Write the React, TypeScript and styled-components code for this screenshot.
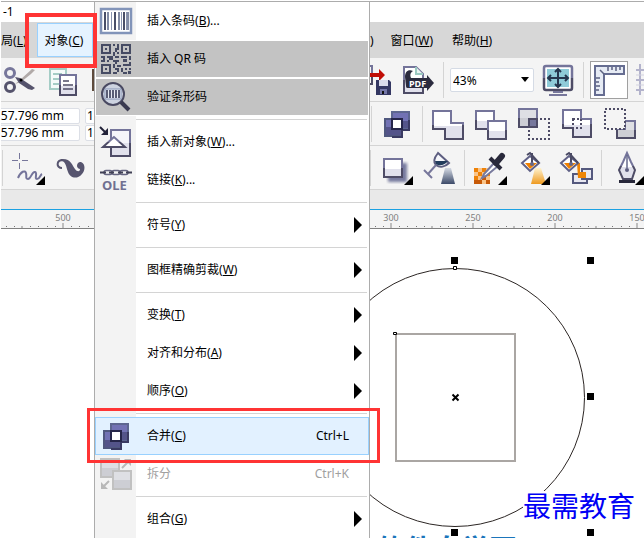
import React from "react";
import styled, { createGlobalStyle } from "styled-components";

const GlobalStyle = createGlobalStyle`
  * { box-sizing: border-box; }
  body {
    margin: 0;
    background: #fff;
    color: #000;
    font: 12px/16px "Noto Sans", "Noto Sans CJK SC", sans-serif;
  }
  button, input, select { font: inherit; color: inherit; }
`;

const Page = styled.div`
  position: relative;
  display: flex;
  flex-direction: column;
  min-height: 100vh;
  padding-left: 1px;
  overflow: hidden;
`;

const TitleBar = styled.header`
  height: 21px;
  margin-top: 1px;
  padding: 2px;
  border-top: 1px solid #acacac;
`;

const Strip = styled.div<{ $bg: string; $height: number; $line?: string }>`
  display: grid;
  grid-template-columns: 93px 276px minmax(0, 1fr);
  height: ${(p) => p.$height}px;
  background: ${(p) => p.$bg};
  border-bottom: ${(p) => (p.$line ? `1px solid ${p.$line}` : "0")};
`;

const Cell = styled.div<{ $column?: number; $gap?: number }>`
  grid-column: ${(p) => p.$column ?? 1};
  display: flex;
  align-items: center;
  gap: ${(p) => p.$gap ?? 0}px;
  min-width: 0;
  overflow: hidden;
`;

const TopMenu = styled.button<{ $open?: boolean; $flush?: boolean }>`
  flex: none;
  height: 34px;
  padding: ${(p) => (p.$flush ? "1px 0 0" : "1px 9px 0 7px")};
  border: ${(p) => (p.$flush ? "0" : "1px")} solid ${(p) => (p.$open ? "#99d1ff" : "transparent")};
  background: ${(p) => (p.$open ? "#e5f3ff" : "transparent")};
  white-space: nowrap;
`;

const TopMenuGroup = styled.div`
  display: flex;
  gap: 1px;
  margin-left: 9px;
`;

const ToolButton = styled.button<{ $width?: number; $pressed?: boolean }>`
  flex: none;
  display: flex;
  align-items: center;
  justify-content: center;
  width: ${(p) => p.$width ?? 43}px;
  height: ${(p) => (p.$pressed ? 38 : 43)}px;
  padding: 0;
  border: ${(p) => (p.$pressed ? "1px solid #a0a0a0" : "0")};
  background: ${(p) => (p.$pressed ? "#fff" : "transparent")};
  overflow: hidden;
  svg { flex: none; display: block; }
`;

const Divider = styled.span<{ $before?: number; $after?: number }>`
  flex: none;
  width: 1px;
  height: 36px;
  margin: 0 ${(p) => p.$after ?? 4}px 0 ${(p) => p.$before ?? 3}px;
  background: #d4d4d4;
`;

const Fields = styled.div`
  display: grid;
  gap: 1px;
  flex: none;
  padding-top: 1px;
`;

const SizeInput = styled.input<{ $cut?: boolean }>`
  width: ${(p) => (p.$cut ? 88 : 30)}px;
  height: 16px;
  margin-left: ${(p) => (p.$cut ? "-9px" : "0")};
  padding: 1px 1px 0;
  border: 1px solid #dcdfe6;
  border-radius: 2px;
  background: #fff;
`;

const ZoomBox = styled.label`
  flex: none;
  display: flex;
  align-items: center;
  width: 84px;
  height: 24px;
  margin: 0 3px 0 2px;
  padding-right: 4px;
  border: 1px solid #d5dbe5;
  border-radius: 2px;
  background: #fff;
  select {
    flex: 1;
    min-width: 0;
    padding: 2px 2px 0;
    border: 0;
    appearance: none;
    background: transparent;
  }
`;

const RulerStrip = styled(Strip)`
  border-top: 1px solid #1ba1e2;
`;

const RulerTrack = styled.div<{ $column: number; $shift: number }>`
  grid-column: ${(p) => p.$column};
  display: flex;
  min-width: 0;
  overflow: hidden;
  > div:first-child { margin-left: ${(p) => p.$shift}px; }
`;

const RulerSegment = styled.div`
  flex: none;
  width: 82px;
  color: #808080;
  font-size: 9px;
  line-height: 11px;
  text-align: center;
  padding-top: 2px;
  svg { display: block; }
`;

const Canvas = styled.main`
  position: relative;
  flex: 1;
  display: grid;
  grid-template-columns: 369px minmax(0, 1fr);
  overflow: hidden;
  > svg { grid-column: 2; display: block; }
`;

const Caption = styled.div`
  position: absolute;
  left: 376px;
  top: 303px;
  color: #1b75bb;
  font-size: 28px;
  line-height: 34px;
  font-weight: 700;
  white-space: nowrap;
`;

const Watermark = styled.div`
  position: absolute;
  left: 522px;
  top: 262px;
  background: #fff;
  color: #0000f5;
  font-size: 28px;
  line-height: 30px;
  white-space: nowrap;
`;

const Menu = styled.div`
  position: absolute;
  top: 1px;
  left: 94px;
  width: 276px;
  border: 1px solid #acacac;
  border-bottom: 0;
  background: linear-gradient(to right, #f3f3f3 41px, #fff 41px);
`;

const edge = { plain: "none", gray: "inset 0 0 0 1px #fff", active: "inset 0 0 0 1px #99d1ff" };
const fill = { plain: "transparent", gray: "#c3c3c3", active: "#e2f1ff" };

const MenuItem = styled.button<{ $tone: "plain" | "gray" | "active" }>`
  display: grid;
  grid-template-columns: 41px 1fr auto;
  align-items: center;
  width: 100%;
  height: 38px;
  padding: 0 20px 0 0;
  border: 0;
  background: ${(p) => fill[p.$tone]};
  box-shadow: ${(p) => edge[p.$tone]};
  text-align: left;
  &:disabled { color: #a0a0a0; }
  > svg { grid-column: 1; margin-left: 2px; }
`;

const ItemLabel = styled.span`
  grid-column: 2;
  padding-left: 11px;
  white-space: nowrap;
`;

const Shortcut = styled.kbd`
  font: inherit;
`;

const SubArrow = styled.span`
  width: 0;
  margin: 0 -13px 0 5px;
  border: 8px solid transparent;
  border-left-color: #000;
  border-right-width: 0;
`;

const MenuLine = styled.hr`
  height: 1px;
  margin: 3px 2px 3px 41px;
  border: 0;
  background: #d4d4d4;
`;

const Highlight = styled.div<{ $x: number; $y: number; $w: number; $h: number; $line: number }>`
  position: absolute;
  left: ${(p) => p.$x}px;
  top: ${(p) => p.$y}px;
  width: ${(p) => p.$w}px;
  height: ${(p) => p.$h}px;
  border: ${(p) => p.$line}px solid #ff3434;
  pointer-events: none;
`;

const Palette = styled.svg`
  position: absolute;
  width: 0;
  height: 0;
`;

const Shades = () => (
  <Palette aria-hidden>
    <defs>
      <linearGradient id="line" x1="0" y1="0" x2="0" y2="1">
        <stop offset=".5" stopColor="#74749a" />
        <stop offset=".5" stopColor="#4e4c66" />
      </linearGradient>
      <linearGradient id="paper" x1="0" y1="0" x2="0" y2="1">
        <stop offset=".55" stopColor="#fff" />
        <stop offset=".55" stopColor="#e1e1ec" />
      </linearGradient>
      <linearGradient id="grey" x1="0" y1="0" x2="0" y2="1">
        <stop offset=".5" stopColor="#dedfe4" />
        <stop offset=".5" stopColor="#cdced4" />
      </linearGradient>
      <linearGradient id="violet" x1="0" y1="0" x2="0" y2="1">
        <stop offset=".5" stopColor="#7272b4" />
        <stop offset=".5" stopColor="#54548a" />
      </linearGradient>
      <linearGradient id="beam" x1="0" y1="0" x2="0" y2="1">
        <stop offset="0" stopColor="#d5dae4" />
        <stop offset="1" stopColor="#3c4a68" />
      </linearGradient>
      <linearGradient id="gold" x1="0" y1="0" x2="0" y2="1">
        <stop offset="0" stopColor="#fff3cf" />
        <stop offset="1" stopColor="#ee9a20" />
      </linearGradient>
      <filter id="soft"><feGaussianBlur stdDeviation="1.5" /></filter>
    </defs>
  </Palette>
);

type IconProps = { box: string; children: React.ReactNode };
const Icon = ({ box, children }: IconProps) => {
  const [, , w, h] = box.split(" ");
  return (
    <svg viewBox={box} width={w} height={h} fill="none" aria-hidden>
      {children}
    </svg>
  );
};

const Flyout = ({ x }: { x: number }) => <path d={`M${x} 185v-9l-9 9z`} fill="#000" />;

const CombineIcon = ({ box }: { box: string }) => (
  <Icon box={box}>
    <rect x="392" y="112" width="17" height="17" fill="url(#violet)" stroke="#5d6690" strokeWidth="2" />
    <rect x="385" y="119" width="17" height="17" fill="url(#violet)" stroke="#50587f" strokeWidth="2" />
    <path d="M392 137h10v-7h7V120" stroke="#3a3a62" strokeWidth="2" />
    <rect x="392" y="119" width="10" height="10" fill="#fff" stroke="#26264a" strokeWidth="2" />
  </Icon>
);

const BucketIcon = ({ x }: { x: number }) => (
  <g transform={`translate(${x} 0)`}>
    <path d="M9 156l-8 7 8 8 9-8z" fill="#fff" stroke="#5f6086" strokeWidth="2" />
    <path d="M4 163h12l-7 6z" fill="#f08000" />
    <path d="M6 155l3-2 9 10M11 153v11" stroke="#4a4a64" strokeWidth="2" />
    <circle cx="11" cy="164" r="2" fill="#666889" />
  </g>
);

const Tick = () => (
  <svg width="82" height="6" viewBox="0 0 82 6" fill="none" aria-hidden>
    <path d="M41 0v5M0 3v2M82 3v2" stroke="#888" />
    {[8, 16, 25, 33, 49, 57, 66, 74].map((x) => (
      <rect key={x} x={x} y="3" width="1" height="1" fill="#777" />
    ))}
  </svg>
);

const Ruler = ({ column, shift, labels }: { column: number; shift: number; labels: string[] }) => (
  <RulerTrack $column={column} $shift={shift}>
    {labels.map((label, i) => (
      <RulerSegment key={i}>
        {label || "\u00a0"}
        <Tick />
      </RulerSegment>
    ))}
  </RulerTrack>
);

const BarcodeIcon = (
  <Icon box="97 2 38 38">
    <rect x="101" y="9" width="30" height="24" fill="#fff" stroke="#8294b9" strokeWidth="2.5" />
    <path d="M105 12v18M115 12v18M124 12v18" stroke="#4a4f68" strokeWidth="2" />
    <path d="M108 12v18M119 12v18M128 12v18" stroke="#65708f" strokeWidth="1.6" />
    <path d="M111.5 12v18M121.5 12v18M126.5 12v18" stroke="#8a94b0" />
  </Icon>
);

const QrIcon = (
  <Icon box="97 40 38 38">
    <path d="M102 45h8v8h-8zM122 45h8v8h-8zM102 65h8v8h-8z" stroke="#464b63" strokeWidth="2" />
    <path
      d="M105 48h2v2h-2zM125 48h2v2h-2zM105 68h2v2h-2zM113 44h2v2h-2zM117 44h2v6h-2zM115 48h2v4h-2zM113 52h2v4h-2zM117 52h2v2h-2zM101 56h4v2h-4zM107 56h6v2h-6zM103 58h2v4h-2zM109 58h4v2h-4zM113 60h6v2h-6zM115 56h4v2h-4zM121 56h6v2h-6zM129 56h2v4h-2zM123 59h4v3h-4zM101 60h2v2h-2zM107 60h2v2h-2zM113 64h2v4h-2zM115 62h2v2h-2zM117 65h4v2h-4zM123 64h6v2h-6zM129 62h2v4h-2zM115 68h4v2h-4zM121 68h2v4h-2zM125 68h2v2h-2zM129 68h2v2h-2zM113 72h4v2h-4zM117 70h2v2h-2zM123 72h4v2h-4zM128 71h3v3h-3z"
      fill="#464b63"
    />
  </Icon>
);

const VerifyIcon = (
  <Icon box="97 78 38 38">
    <circle cx="113" cy="94" r="11" fill="#cdd3e0" stroke="#4a4a62" strokeWidth="2" />
    <rect x="105" y="89" width="16" height="10" fill="#e7ebf3" stroke="#8895b5" />
    <path d="M107 90v8M110 90v8M113 90v8M116 90v8M119 90v8" stroke="#4b4f69" strokeWidth="1.8" />
    <path d="M121 102l8 8" stroke="#3b3b50" strokeWidth="4" />
  </Icon>
);

const ObjectIcon = (
  <Icon box="97 123 38 38">
    <path d="M111 130h19v26h-19z" fill="#f5f5fa" stroke="url(#line)" strokeWidth="2" />
    <path d="M112 143h17v12h-17z" fill="#e1e1ec" />
    <path d="M114 137l-11 10h22z" fill="#fff" stroke="url(#line)" strokeWidth="2" />
    <path d="M100 127l5 5" stroke="#222238" strokeWidth="2" />
    <path d="M108 128v7h-7z" fill="#222238" />
  </Icon>
);

const OleText = styled.text`
  font: 700 13px "Noto Sans", sans-serif;
`;

const OleIcon = (
  <Icon box="97 161 38 38">
    <rect x="104" y="170.5" width="8" height="4" rx="2" stroke="#666681" strokeWidth="1.5" />
    <rect x="112" y="170.5" width="8" height="4" rx="2" stroke="#666681" strokeWidth="1.5" />
    <rect x="120" y="170.5" width="8" height="4" rx="2" stroke="#666681" strokeWidth="1.5" />
    <path d="M100 172.5h6M109 172.5h5M118 172.5h5M126 172.5h6" stroke="#404055" strokeWidth="2" />
    <OleText x="102" y="190" fill="#707091">OLE</OleText>
  </Icon>
);

const SplitIcon = (
  <Icon box="97 455 38 38">
    <path d="M101 459h18v18h-18z" fill="url(#grey)" stroke="#c1c1c1" strokeWidth="2" />
    <path d="M113 471h18v18h-18z" fill="url(#grey)" stroke="#c1c1c1" strokeWidth="2" />
    <path d="M122 468l6-6M109 481l-6 6" stroke="#b8b8b8" strokeWidth="2" />
    <path d="M131 459v7l-7-7zM101 482v7h7z" fill="#b8b8b8" />
  </Icon>
);

type Entry = {
  text: string;
  k?: string;
  tail?: string;
  tone?: "plain" | "gray" | "active";
  icon?: React.ReactNode;
  arrow?: boolean;
  keys?: string;
  off?: boolean;
};

const groups: Entry[][] = [
  [
    { text: "插入条码", k: "B", tail: "...", icon: BarcodeIcon },
    { text: "插入 QR 码", tone: "gray", icon: QrIcon },
    { text: "验证条形码", tone: "gray", icon: VerifyIcon },
  ],
  [
    { text: "插入新对象", k: "W", tail: "...", icon: ObjectIcon },
    { text: "链接", k: "K", tail: "...", icon: OleIcon },
  ],
  [{ text: "符号", k: "Y", arrow: true }],
  [{ text: "图框精确剪裁", k: "W", arrow: true }],
  [
    { text: "变换", k: "T", arrow: true },
    { text: "对齐和分布", k: "A", arrow: true },
    { text: "顺序", k: "O", arrow: true },
  ],
  [
    { text: "合并", k: "C", tone: "active", icon: <CombineIcon box="378 105 38 38" />, keys: "Ctrl+L" },
    { text: "拆分", icon: SplitIcon, keys: "Ctrl+K", off: true },
  ],
  [{ text: "组合", k: "G", arrow: true }],
];

const Label = ({ text, k, tail }: { text: string; k?: string; tail?: string }) => (
  <>
    {text}
    {k && <>(<u>{k}</u>)</>}
    {tail}
  </>
);

const ObjectMenu = () => (
  <Menu role="menu" aria-label="对象">
    {groups.map((group, i) => (
      <React.Fragment key={i}>
        {i > 0 && <MenuLine />}
        {group.map((e) => (
          <MenuItem key={e.text} role="menuitem" $tone={e.tone ?? "plain"} disabled={e.off}>
            {e.icon}
            <ItemLabel><Label text={e.text} k={e.k} tail={e.tail} /></ItemLabel>
            {e.keys && <Shortcut>{e.keys}</Shortcut>}
            {e.arrow && <SubArrow />}
          </MenuItem>
        ))}
      </React.Fragment>
    ))}
  </Menu>
);

const StandardBar = () => (
  <Strip $bg="#f4f4f4" $height={44} $line="#d4d4d4">
    <Cell>
      <ToolButton aria-label="剪切">
        <Icon box="1 58 43 43">
          <path d="M15 84l5-4 12-11 3 1-4 4-10 8z" fill="#b1aaa8" />
          <path d="M15 77l5 1 15 10-3 2-4-1-9-6z" fill="#55536c" />
          <circle cx="10" cy="73" r="4.5" stroke="#77779b" strokeWidth="3" />
          <circle cx="10" cy="87" r="4.5" stroke="#55536c" strokeWidth="3" />
          <circle cx="21" cy="80" r="1.5" fill="#000" />
        </Icon>
      </ToolButton>
      <ToolButton aria-label="复制">
        <Icon box="44 58 43 43">
          <path d="M50 69h16v20H50z" fill="#f5fbfa" stroke="#a5cdc6" strokeWidth="2" />
          <path d="M53 74h9M53 79h6M53 84h6" stroke="#a5cdc6" strokeWidth="2" />
          <path d="M60 75h16v20H60z" fill="url(#paper)" stroke="url(#line)" strokeWidth="2" />
          <path d="M63 81h6M63 85h10M63 89h10" stroke="#4e4c66" strokeWidth="1.5" />
        </Icon>
      </ToolButton>
      <ToolButton aria-label="粘贴">
        <Icon box="87 58 43 43">
          <path d="M92 69h30v22H92z" fill="#5e4b3d" />
        </Icon>
      </ToolButton>
    </Cell>
    <Cell $column={3}>
      <ToolButton $width={27} aria-label="导出">
        <Icon box="370 58 27 43">
          <path d="M368 66h4v18h-4" stroke="url(#line)" strokeWidth="2" />
          <path d="M370 73h9v-4l6 6-6 6v-4h-9z" fill="#c00d05" />
          <path d="M376 80h13l2 2v13h-15z" fill="#343762" />
          <path d="M379 80h9v6h-9z" fill="#d9dbea" />
          <path d="M380 89h7v5h-7z" fill="#7477a8" />
          <path d="M382 91h2v3h-2z" fill="#111" />
        </Icon>
      </ToolButton>
      <ToolButton aria-label="发布为 PDF">
        <Icon box="397 58 43 43">
          <path d="M404 67h12l7 7v19h-19z" fill="url(#paper)" stroke="url(#line)" strokeWidth="2" />
          <path d="M416 67v7h7" fill="#eaf5f3" stroke="#9ccac2" strokeWidth="2" />
          <path d="M413 71c-5-2-8 1-8 6l1 9c0 2 1 2 3 2h18v3l7-8-7-8v3h-16c-1-3-1-5 2-7z" fill="#2b2b3e" />
          <text x="409" y="87" fontSize="9" fontWeight="700" fill="#fff">PDF</text>
        </Icon>
      </ToolButton>
      <Divider $before={3} $after={4} />
      <ZoomBox>
        <select aria-label="缩放级别" defaultValue="43%">
          <option>43%</option>
        </select>
        <Icon box="0 0 8 5"><path d="M0 0h8L4 5z" fill="#000" /></Icon>
      </ZoomBox>
      <ToolButton aria-label="全屏预览">
        <Icon box="537 58 43 43">
          <rect x="544" y="66" width="28" height="24" rx="2" fill="#fff" stroke="url(#line)" strokeWidth="2.5" />
          <path d="M547 69h22v18h-22z" fill="#8fcbd8" />
          <path d="M548 78h20M558 69v18M551 75l-3 3 3 3M565 75l3 3-3 3M555 72l3-3 3 3M555 84l3 3 3-3" stroke="#26364e" strokeWidth="2" />
          <path d="M553 92h10M549 95h18" stroke="#77779b" strokeWidth="2" />
        </Icon>
      </ToolButton>
      <Divider $before={3} $after={6} />
      <ToolButton $width={38} $pressed aria-label="显示标尺">
        <Icon box="591 62 36 36">
          <path d="M595 66h29v8h-20v21h-9z" fill="#e6ebf4" stroke="#666d91" strokeWidth="2" />
          <path d="M608 67v4M612 67v3M616 67v4M620 67v3M596 78h4M596 82h3M596 86h4M596 90h3M600 70l4 4" stroke="#5b6080" strokeWidth="1.5" />
        </Icon>
      </ToolButton>
      <ToolButton aria-label="显示网格">
        <Icon box="628 58 43 43">
          <path d="M636 70h30M636 80h30M636 90h30M640 64v31M650 64v31" stroke="#b3b3cc" strokeWidth="2" />
          <path d="M636 75h30M636 85h30" stroke="#d2d2e0" />
        </Icon>
      </ToolButton>
    </Cell>
  </Strip>
);

const PropertyBar = () => (
  <Strip $bg="#f4f4f4" $height={44} $line="#d4d4d4">
    <Cell $gap={5}>
      <Fields>
        <SizeInput $cut aria-label="宽度" defaultValue="157.796 mm" />
        <SizeInput $cut aria-label="高度" defaultValue="157.796 mm" />
      </Fields>
      <Fields>
        <SizeInput aria-label="水平比例" defaultValue="1" />
        <SizeInput aria-label="垂直比例" defaultValue="1" />
      </Fields>
    </Cell>
    <Cell $column={3}>
      <Divider $before={1} $after={4} />
      <ToolButton aria-label="合并"><CombineIcon box="376 102 43 43" /></ToolButton>
      <Divider $before={3} $after={4} />
      <ToolButton aria-label="焊接">
        <Icon box="427 102 43 43">
          <path d="M433 111h18v12h12v16h-18v-10h-12z" fill="url(#paper)" stroke="url(#line)" strokeWidth="2" />
        </Icon>
      </ToolButton>
      <ToolButton aria-label="修剪">
        <Icon box="470 102 43 43">
          <path d="M476 111h18v18h-18z" fill="url(#paper)" stroke="url(#line)" strokeWidth="2" />
          <path d="M488 121h18v18h-18z" fill="url(#paper)" stroke="url(#line)" strokeWidth="2" />
        </Icon>
      </ToolButton>
      <ToolButton aria-label="相交">
        <Icon box="513 102 43 43">
          <path d="M519 109h18v18h-18z" fill="url(#grey)" stroke="url(#line)" strokeWidth="2" />
          <path d="M529 119h8v8h-8z" fill="#77789c" stroke="#4e4c66" strokeWidth="2" />
          <path d="M540 119h9v20h-20v-10" stroke="#4e4c66" strokeWidth="2" strokeDasharray="2 2" />
        </Icon>
      </ToolButton>
      <ToolButton aria-label="简化">
        <Icon box="556 102 43 43">
          <path d="M563 110h18v9h10v18h-18v-9h-10z" fill="url(#paper)" stroke="url(#line)" strokeWidth="2" />
          <path d="M573 119h8v9h-8z" stroke="#4e4c66" strokeWidth="2" strokeDasharray="2 2" />
        </Icon>
      </ToolButton>
      <ToolButton aria-label="移除后面对象">
        <Icon box="599 102 43 43">
          <path d="M625 121h10v17h-18v-9h8z" fill="url(#grey)" stroke="url(#line)" strokeWidth="2" />
          <path d="M605 109h20v20h-20z" fill="#f4f4f4" stroke="#4e4c66" strokeWidth="2" strokeDasharray="2 2" />
        </Icon>
      </ToolButton>
    </Cell>
  </Strip>
);

const ToolBar = () => (
  <Strip $bg="#f4f4f4" $height={44} $line="#d4d4d4">
    <Cell>
      <Divider $before={1} $after={5} />
      <ToolButton aria-label="手绘">
        <Icon box="8 146 43 43">
          <path d="M12 160.5h6M22 160.5h6M19.5 153v6M19.5 163v6" stroke="#77779b" />
          <path d="M18 178c3-7 7-8 8-5s-1 6 2 6 4-8 7-7-1 7 2 7 3-4 5-5" stroke="#74749a" strokeWidth="2" />
          <Flyout x={45} />
        </Icon>
      </ToolButton>
      <ToolButton aria-label="艺术笔">
        <Icon box="51 146 43 43">
          <path d="M62 168c-6 0-6-8 1-8" stroke="#57556f" strokeWidth="2" />
          <path d="M61 159c10-1 11 6 14 10 2 3 5 3 5 0-5-1-3-8 1-7 5 2 4 9 1 12-5 6-12 4-14-2-2-5-2-11-7-11z" fill="#57556f" />
        </Icon>
      </ToolButton>
    </Cell>
    <Cell $column={3}>
      <Divider $before={0} $after={5} />
      <ToolButton aria-label="阴影">
        <Icon box="376 146 43 43">
          <rect x="388" y="163" width="19" height="19" fill="#777a9e" filter="url(#soft)" />
          <path d="M384 159h18v18h-18z" fill="url(#paper)" stroke="url(#line)" strokeWidth="2" />
          <Flyout x={413} />
        </Icon>
      </ToolButton>
      <ToolButton aria-label="透明度">
        <Icon box="419 146 43 43">
          <path d="M438 153c-4 5-5 9-2 12 4 3 9 2 13-2z" fill="#f6f7fb" stroke="#5d5e80" strokeWidth="2" />
          <path d="M435 161h13c-4 5-9 5-12 3z" fill="#223c5c" />
          <path d="M436 165l-8 9M424 170l8 8" stroke="#77779b" strokeWidth="2" />
          <path d="M445 168h6l4 16h-14z" fill="url(#beam)" />
        </Icon>
      </ToolButton>
      <Divider $before={2} $after={4} />
      <ToolButton aria-label="颜色滴管">
        <Icon box="469 146 43 43">
          <path d="M474 168h16v16h-16z" fill="#f9c489" />
          <path d="M474 168h4v4h-4zM482 168h4v4h-4zM478 172h4v4h-4zM486 176h4v-4h-4zM474 176h4v4h-4z" fill="#ee8208" />
          <path d="M478 180h4v4h-4zM482 176h4v4h-4zM486 180h4v4h-4zM474 180h4v4h-4z" fill="#c75a08" />
          <path d="M495 162l-11 12-2 4 4-2 12-10" fill="#fff" stroke="#77799c" strokeWidth="2" />
          <path d="M490 158l11 11" stroke="#29293b" strokeWidth="4" />
          <path d="M496 163l6-7" stroke="#29293b" strokeWidth="6" strokeLinecap="round" />
          <Flyout x={507} />
        </Icon>
      </ToolButton>
      <ToolButton aria-label="交互式填充">
        <Icon box="512 146 43 43">
          <BucketIcon x={521} />
          <path d="M535 168h6l5 16h-15z" fill="url(#gold)" />
          <Flyout x={550} />
        </Icon>
      </ToolButton>
      <ToolButton aria-label="智能填充">
        <Icon box="555 146 43 43">
          <path d="M573 174h14v9h-14z" fill="#e8e8f1" stroke="#55597e" strokeWidth="2" />
          <path d="M582 169h10v10h-10z" fill="#e8e8f1" stroke="#55597e" strokeWidth="2" />
          <path d="M577 163h3v9h6v6h-8z" fill="#ef8505" />
          <BucketIcon x={560} />
        </Icon>
      </ToolButton>
      <Divider $before={3} $after={5} />
      <ToolButton aria-label="轮廓笔">
        <Icon box="607 146 43 43">
          <path d="M627 153l-4 9-4 8 4 9h9l3-9-4-8z" fill="url(#paper)" stroke="url(#line)" strokeWidth="2" />
          <path d="M627 155v13" stroke="#666a8c" strokeWidth="1.5" />
          <circle cx="627" cy="170" r="2" fill="#5d5e80" />
          <path d="M619 180h16v3h-16z" fill="#29293b" />
          <Flyout x={644} />
        </Icon>
      </ToolButton>
    </Cell>
  </Strip>
);

const handles = [[451, 257], [587, 257], [587, 393], [451, 529], [587, 529]];

const Artwork = () => (
  <svg viewBox="370 229 274 309" width="274" height="309" fill="none" aria-hidden>
    <ellipse cx="455" cy="397.5" rx="129.5" ry="129" stroke="#2c2624" />
    <rect x="396" y="334" width="119" height="127" stroke="#aaa6a3" strokeWidth="2" />
    <path d="M453.5 266.5h3v3h-3zM393.5 332.5h3v2h-3z" fill="#fff" stroke="#000" />
    <path d="M452.5 394.5l6 6M458.5 394.5l-6 6" stroke="#000" strokeWidth="2" />
    {handles.map(([x, y]) => (
      <rect key={`${x}-${y}`} x={x} y={y} width="7" height="7" fill="#000" />
    ))}
  </svg>
);

export default function App() {
  return (
    <Page>
      <GlobalStyle />
      <Shades />
      <TitleBar>-1</TitleBar>
      <Strip $bg="#d7d7d7" $height={36} as="nav">
        <Cell $gap={10}>
          <TopMenu $flush><Label text="局" k="L" /></TopMenu>
          <TopMenu $open aria-expanded><Label text="对象" k="C" /></TopMenu>
        </Cell>
        <Cell $column={3}>
          <TopMenu $flush>)</TopMenu>
          <TopMenuGroup>
            <TopMenu><Label text="窗口" k="W" /></TopMenu>
            <TopMenu><Label text="帮助" k="H" /></TopMenu>
          </TopMenuGroup>
        </Cell>
      </Strip>
      <StandardBar />
      <PropertyBar />
      <ToolBar />
      <Strip $bg="#e9e9e9" $height={19} />
      <RulerStrip $bg="#f4f4f4" $height={20} $line="#808080">
        <Ruler column={1} shift={-61} labels={["", "500"]} />
        <Ruler column={3} shift={-20} labels={["300", "250", "200", "150"]} />
      </RulerStrip>
      <Canvas>
        <Artwork />
        <Caption>软件自学网</Caption>
        <Watermark>最需教育</Watermark>
      </Canvas>
      <ObjectMenu />
      <Highlight $x={25} $y={13} $w={72} $h={55} $line={4} />
      <Highlight $x={87} $y={408} $w={293} $h={55} $line={3} />
    </Page>
  );
}
